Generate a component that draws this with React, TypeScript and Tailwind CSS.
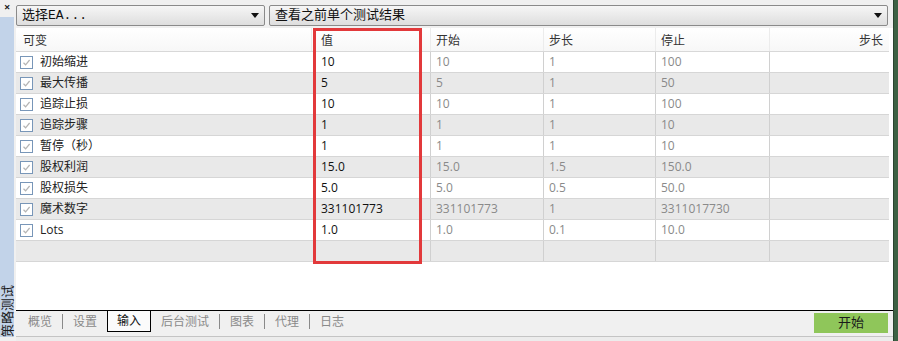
const rows = [
  { name: "初始缩进", value: "10", start: "10", step: "1", stop: "100" },
  { name: "最大传播", value: "5", start: "5", step: "1", stop: "50" },
  { name: "追踪止损", value: "10", start: "10", step: "1", stop: "100" },
  { name: "追踪步骤", value: "1", start: "1", step: "1", stop: "10" },
  { name: "暂停（秒）", value: "1", start: "1", step: "1", stop: "10" },
  { name: "股权利润", value: "15.0", start: "15.0", step: "1.5", stop: "150.0" },
  { name: "股权损失", value: "5.0", start: "5.0", step: "0.5", stop: "50.0" },
  { name: "魔术数字", value: "331101773", start: "331101773", step: "1", stop: "3311017730" },
  { name: "Lots", value: "1.0", start: "1.0", step: "0.1", stop: "10.0" },
];

const cols = "grid grid-cols-[296px_119px_113px_112px_114px_1fr]";

function CheckBox() {
  return (
    <span className="w-[13px] h-[13px] border border-[#7896b8] bg-white flex items-center justify-center shrink-0">
      <svg width="9" height="9" viewBox="0 0 9 9">
        <path d="M1.5 4.8 L3.6 6.8 L7.6 2" fill="none" stroke="#b4b4b4" strokeWidth="1.2" />
      </svg>
    </span>
  );
}

function Select({ label, className }: { label: string; className: string }) {
  return (
    <div
      className={`h-[21px] flex items-center justify-between rounded-[2px] border border-[#8a8a8a] bg-gradient-to-b from-[#f6f6f6] to-[#dedede] pl-[5px] pr-[5px] ${className}`}
    >
      <span className="text-[13px] text-[#111] font-['Liberation_Mono','Noto_Sans_CJK_SC',monospace] leading-none">
        {label}
      </span>
      <svg width="8" height="5" viewBox="0 0 8 5">
        <path d="M0 0 H8 L4 5 Z" fill="#111" />
      </svg>
    </div>
  );
}

function Sep() {
  return <span className="w-px h-[15px] bg-[#8a8a8a]" />;
}

export default function App() {
  return (
    <div className="relative w-[898px] h-[341px] flex bg-[#f0f0f0] overflow-hidden font-['Open_Sans','Noto_Sans_CJK_SC',sans-serif] text-[12px]">
      {/* left docking strip */}
      <div className="w-[16px] flex flex-col">
        <div className="h-[17px] flex items-start pl-[4px] pt-[1px] text-[11px] font-bold leading-[12px] text-[#222]">×</div>
        <div className="flex-1 flex pr-[2px] pb-[4px]">
          <div className="flex-1 bg-[#c2d3e9] flex items-end justify-center">
            <span className="[writing-mode:vertical-rl] [text-orientation:sideways] rotate-180 whitespace-nowrap text-[13px] leading-[14px] text-[#1a1a1a] pb-[1px]">
              策略测试
            </span>
          </div>
        </div>
      </div>

      {/* main */}
      <div className="flex-1 flex flex-col">
        <div className="h-[28px] flex items-start pt-[5px] gap-[4px] pr-[5px]">
          <Select label="选择EA..." className="w-[249px]" />
          <Select label="查看之前单个测试结果" className="flex-1" />
        </div>

        <div className="h-[282px] bg-white pr-[4px] flex flex-col">
          <div className={`${cols} h-[24px] border-b border-[#d8d8d8] text-[#333] bg-gradient-to-b from-white to-[#f7f7f7]`}>
            <div className="flex items-center pl-[7px] pt-[2px] border-r border-[#ececec]">可变</div>
            <div className="flex items-center pl-[9px] pt-[2px] border-r border-[#ececec]">值</div>
            <div className="flex items-center pl-[5px] pt-[2px] border-r border-[#ececec]">开始</div>
            <div className="flex items-center pl-[5px] pt-[2px] border-r border-[#ececec]">步长</div>
            <div className="flex items-center pl-[5px] pt-[2px] border-r border-[#ececec]">停止</div>
            <div className="flex items-center justify-end pr-[6px] pt-[2px]">步长</div>
          </div>
          {rows.map((r, i) => (
            <div
              key={r.name}
              className={`${cols} h-[21px] border-b border-[#d6d6d6] ${i % 2 === 1 ? "bg-[#e9e9e9]" : "bg-white"}`}
            >
              <div className="flex items-center pl-[4px] gap-[7px] text-[#222]">
                <CheckBox />
                <span>{r.name}</span>
              </div>
              <div className="flex items-center pl-[9px] border-r border-[#d0d0d0] text-[#111]">{r.value}</div>
              <div className="flex items-center pl-[5px] border-r border-[#d0d0d0] text-[#8a8a8a]">{r.start}</div>
              <div className="flex items-center pl-[5px] border-r border-[#d0d0d0] text-[#8a8a8a]">{r.step}</div>
              <div className="flex items-center pl-[5px] border-r border-[#d0d0d0] text-[#8a8a8a]">{r.stop}</div>
              <div />
            </div>
          ))}
          <div className={`${cols} h-[21px] border-b border-[#d6d6d6] bg-[#e9e9e9]`}>
            <div />
            <div className="border-r border-[#d0d0d0]" />
            <div className="border-r border-[#d0d0d0]" />
            <div className="border-r border-[#d0d0d0]" />
            <div className="border-r border-[#d0d0d0]" />
            <div />
          </div>
        </div>

        {/* bottom tabs */}
        <div className="h-[26px] border-t border-black flex items-start text-[12px] text-[#8a8a8a] pr-[5px]">
          <div className="flex items-center h-[21px] pl-[12px] gap-[10px]">
            <span>概览</span>
            <Sep />
            <span>设置</span>
          </div>
          <div className="ml-[10px] w-[44px] h-[21px] bg-[#fbfbfb] border-x border-b border-black flex items-center justify-center text-[#111]">
            输入
          </div>
          <div className="flex items-center h-[21px] pl-[10px] gap-[10px]">
            <span>后台测试</span>
            <Sep />
            <span>图表</span>
            <Sep />
            <span>代理</span>
            <Sep />
            <span>日志</span>
          </div>
          <button className="ml-auto mt-[2px] w-[74px] h-[20px] bg-[#8fc65a] text-[#1a1a1a] text-[13px] flex items-center justify-center">
            开始
          </button>
        </div>
        <div className="flex-1 border-t border-[#c4c4c4] bg-[#ececec]" />
      </div>

      {/* right window edge */}
      <div className="w-[5px] bg-[#3d6144] border-l border-[#2b4430]" />

      {/* red annotation box */}
      <div className="absolute left-[313px] top-[28px] w-[109px] h-[236px] border-[3px] border-[#e2393b]" />
    </div>
  );
}
